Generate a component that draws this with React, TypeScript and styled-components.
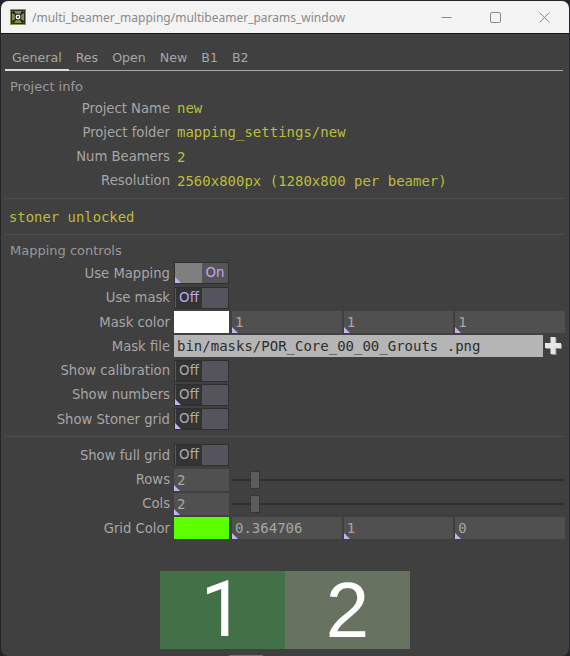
import styled, { createGlobalStyle } from "styled-components";

const GlobalStyle = createGlobalStyle`
  html, body {
    margin: 0;
    padding: 0;
    background: #23252b;
  }
`;

const Window = styled.div`
  width: 570px;
  height: 656px;
  box-sizing: border-box;
  overflow: hidden;
  background: #404040;
  border: 1px solid #26262a;
  border-bottom: none;
  border-radius: 8px;
  font-family: "DejaVu Sans", sans-serif;
`;

const TitleBar = styled.div`
  height: 32px;
  background: #f3f3f3;
  border-bottom: 1px solid #151515;
  display: flex;
  align-items: center;
  padding: 0 0 0 9px;
  font-family: "Noto Sans", sans-serif;
  font-size: 12px;
  color: #8a8a8a;
`;

const TitleText = styled.span`
  margin-left: 6px;
  flex: 1;
`;

const WinButton = styled.div`
  width: 49px;
  height: 32px;
  display: flex;
  align-items: center;
  justify-content: center;
`;

const Content = styled.div`
  padding: 0 4px;
`;

const Tabs = styled.div`
  display: flex;
  height: 21px;
  padding-top: 15px;
  margin-right: 2px;
  border-bottom: 1px solid #a8a8a8;
`;

const Tab = styled.div<{ $active?: boolean }>`
  font-size: 12.6px;
  color: #a6a6a6;
  padding: 0 7px;
  height: 22px;
  line-height: 17px;
  box-sizing: border-box;
  border-bottom: ${(p) => (p.$active ? "2px solid #dcdcdc" : "none")};
`;

const SectionTitle = styled.div`
  font-size: 13px;
  color: #999;
  padding-left: 5px;
  margin-top: 7px;
  height: 17px;
  line-height: 17px;
`;

const InfoRows = styled.div`
  display: flex;
  flex-direction: column;
  gap: 8.3px;
  margin-top: 5px;
  padding-bottom: 9px;
`;

const Row = styled.div`
  display: flex;
  align-items: center;
  height: 16px;
`;

const Label = styled.div`
  width: 165px;
  text-align: right;
  font-size: 13.2px;
  color: #a6a6a6;
  flex-shrink: 0;
  white-space: nowrap;
`;

const Value = styled.div`
  margin-left: 7px;
  font-family: "DejaVu Sans Mono", monospace;
  font-size: 14px;
  color: #bcbc3e;
  white-space: nowrap;
`;

const Divider = styled.div`
  height: 1px;
  background: #4e4e4e;
`;

const Unlocked = styled.div`
  font-family: "DejaVu Sans Mono", monospace;
  font-size: 13.9px;
  color: #bcbc3e;
  padding-left: 4px;
  height: 35px;
  line-height: 36px;
`;

const ControlRows = styled.div<{ $top: number; $bottom?: number }>`
  display: flex;
  flex-direction: column;
  gap: 2.3px;
  padding-top: ${(p) => p.$top}px;
  padding-bottom: ${(p) => p.$bottom ?? 0}px;
`;

const ControlRow = styled.div`
  display: flex;
  align-items: center;
  height: 22px;
`;

const Corner = styled.span`
  position: absolute;
  left: 0;
  bottom: 0;
  width: 0;
  height: 0;
  border-left: 6px solid #c2b2f2;
  border-top: 6px solid transparent;
`;

const ToggleBox = styled.div`
  position: relative;
  margin-left: 4px;
  width: 55px;
  height: 22px;
  box-sizing: border-box;
  display: flex;
  font-size: 13.4px;
  line-height: 20px;
  background: #2e2e2e;
  border: 1px solid #2f2f2f;
  flex-shrink: 0;
`;

const ToggleOn = styled.div`
  width: 27px;
  background: #7f7f7f;
`;

const ToggleOnLabel = styled.div`
  flex: 1;
  background: #555;
  color: #b9a8f0;
  text-align: center;
`;

const ToggleOffLabel = styled.div<{ $accent?: boolean }>`
  width: 27px;
  box-sizing: border-box;
  background: #333;
  border-left: 1px solid #5a5a5a;
  color: ${(p) => (p.$accent ? "#b9a8f0" : "#ababab")};
  text-align: center;
`;

const ToggleThumb = styled.div`
  flex: 1;
  background: #55545c;
`;

const Swatch = styled.div<{ $color: string }>`
  margin-left: 4px;
  width: 55px;
  height: 22px;
  background: ${(p) => p.$color};
  flex-shrink: 0;
`;

const NumberCells = styled.div`
  display: flex;
  gap: 2px;
  margin-left: 3px;
  flex: 1;
`;

const NumberCell = styled.div`
  position: relative;
  flex: 1;
  height: 22px;
  background: #505050;
  color: #a6a6a6;
  font-family: "DejaVu Sans Mono", monospace;
  font-size: 14px;
  line-height: 23px;
  padding-left: 3px;
`;

const FileField = styled.div`
  margin-left: 4px;
  width: 369px;
  height: 22px;
  background: #b5b5b5;
  color: #2e2e2e;
  font-family: "DejaVu Sans Mono", monospace;
  font-size: 14px;
  line-height: 22px;
  padding-left: 3px;
  box-sizing: border-box;
  white-space: nowrap;
  flex-shrink: 0;
`;

const PlusIcon = styled.svg`
  margin-left: 2px;
  flex-shrink: 0;
`;

const Num = styled.div`
  position: relative;
  margin-left: 4px;
  width: 55px;
  height: 22px;
  background: #505050;
  color: #a6a6a6;
  font-family: "DejaVu Sans Mono", monospace;
  font-size: 14px;
  line-height: 23px;
  padding-left: 3px;
  box-sizing: border-box;
  flex-shrink: 0;
`;

const Slider = styled.div`
  position: relative;
  flex: 1;
  margin-left: 3px;
  height: 22px;
  display: flex;
  align-items: center;
`;

const SliderTrack = styled.div`
  flex: 1;
  height: 2px;
  background: #2f2f2f;
`;

const SliderThumb = styled.div`
  position: absolute;
  left: 18px;
  top: 2px;
  width: 10px;
  height: 18px;
  box-sizing: border-box;
  background: #5c5c5c;
  border: 1px solid #363636;
`;

const Preview = styled.div`
  display: flex;
  margin: 32px 0 0 155px;
  width: 250px;
  height: 78px;
`;

const PreviewCell = styled.div<{ $color: string; $face: string }>`
  flex: 1;
  background: ${(p) => p.$color};
  color: #fff;
  font-family: ${(p) => p.$face}, sans-serif;
  font-size: 78px;
  line-height: 78px;
  text-align: center;
`;

/* the top edge of whatever sits below the preview, cut off by the window */
const CutOffEdge = styled.div`
  margin: 6px 0 0 224px;
  width: 34px;
  height: 1px;
  background: #74706f;
`;

const Toggle = ({ on, accent, corner = true }: { on?: boolean; accent?: boolean; corner?: boolean }) => (
  <ToggleBox>
    {on ? (
      <>
        <ToggleOn />
        <ToggleOnLabel>On</ToggleOnLabel>
      </>
    ) : (
      <>
        <ToggleOffLabel $accent={accent}>Off</ToggleOffLabel>
        <ToggleThumb />
      </>
    )}
    {corner && <Corner />}
  </ToggleBox>
);

const Cells = ({ values }: { values: string[] }) => (
  <NumberCells>
    {values.map((v, i) => (
      <NumberCell key={i}>
        {v}
        <Corner />
      </NumberCell>
    ))}
  </NumberCells>
);

const PLUS = "M5.5 0 H10.5 V6 H16 V11 H10.5 V17 H5.5 V11 H0 V6 H5.5 Z";

export default function App() {
  return (
    <Window>
      <GlobalStyle />
      <TitleBar>
        <svg width="16" height="16" viewBox="0 0 16 16">
          <rect width="16" height="16" fill="#8b9a58" />
          <rect x="1.5" y="1.5" width="13" height="13" fill="#7f8e50" stroke="#2a2f1c" />
          <path d="M3 3 L13 13 M13 3 L3 13" stroke="#222" strokeWidth="1.5" />
          <circle cx="8" cy="8" r="3" fill="#f2f2f2" stroke="#222" />
          <circle cx="8" cy="8" r="1" fill="#222" />
          <circle cx="3.5" cy="3.5" r="1.3" fill="#1d1d1d" />
          <circle cx="12.5" cy="3.5" r="1.3" fill="#1d1d1d" />
          <circle cx="3.5" cy="12.5" r="1.3" fill="#1d1d1d" />
          <circle cx="12.5" cy="12.5" r="1.3" fill="#1d1d1d" />
        </svg>
        <TitleText>/multi_beamer_mapping/multibeamer_params_window</TitleText>
        <WinButton>
          <svg width="11" height="11" viewBox="0 0 11 11">
            <path d="M0.5 5.5 H10.5" stroke="#8a8a8a" />
          </svg>
        </WinButton>
        <WinButton>
          <svg width="11" height="11" viewBox="0 0 11 11">
            <rect x="0.5" y="0.5" width="10" height="10" rx="1.5" fill="none" stroke="#8a8a8a" />
          </svg>
        </WinButton>
        <WinButton>
          <svg width="11" height="11" viewBox="0 0 11 11">
            <path d="M0.5 0.5 L10.5 10.5 M10.5 0.5 L0.5 10.5" stroke="#8a8a8a" />
          </svg>
        </WinButton>
      </TitleBar>
      <Content>
        <Tabs>
          <Tab $active>General</Tab>
          <Tab>Res</Tab>
          <Tab>Open</Tab>
          <Tab>New</Tab>
          <Tab>B1</Tab>
          <Tab>B2</Tab>
        </Tabs>
        <SectionTitle>Project info</SectionTitle>
        <InfoRows>
          <Row>
            <Label>Project Name</Label>
            <Value>new</Value>
          </Row>
          <Row>
            <Label>Project folder</Label>
            <Value>mapping_settings/new</Value>
          </Row>
          <Row>
            <Label>Num Beamers</Label>
            <Value>2</Value>
          </Row>
          <Row>
            <Label>Resolution</Label>
            <Value>2560x800px (1280x800 per beamer)</Value>
          </Row>
        </InfoRows>
        <Divider />
        <Unlocked>stoner unlocked</Unlocked>
        <Divider />
        <SectionTitle>Mapping controls</SectionTitle>
        <ControlRows $top={3.6} $bottom={6}>
          <ControlRow>
            <Label>Use Mapping</Label>
            <Toggle on />
          </ControlRow>
          <ControlRow>
            <Label>Use mask</Label>
            <Toggle accent corner={false} />
          </ControlRow>
          <ControlRow>
            <Label>Mask color</Label>
            <Swatch $color="#ffffff" />
            <Cells values={["1", "1", "1"]} />
          </ControlRow>
          <ControlRow>
            <Label>Mask file</Label>
            <FileField>bin/masks/POR_Core_00_00_Grouts .png</FileField>
            <PlusIcon width="17" height="18" viewBox="0 0 17 18">
              <path d={PLUS} fill="#8c8c8c" transform="translate(1 1)" />
              <path d={PLUS} fill="#e6e6e6" />
            </PlusIcon>
          </ControlRow>
          <ControlRow>
            <Label>Show calibration</Label>
            <Toggle corner={false} />
          </ControlRow>
          <ControlRow>
            <Label>Show numbers</Label>
            <Toggle />
          </ControlRow>
          <ControlRow>
            <Label>Show Stoner grid</Label>
            <Toggle />
          </ControlRow>
        </ControlRows>
        <Divider />
        <ControlRows $top={7}>
          <ControlRow>
            <Label>Show full grid</Label>
            <Toggle corner={false} />
          </ControlRow>
          <ControlRow>
            <Label>Rows</Label>
            <Num>
              2
              <Corner />
            </Num>
            <Slider>
              <SliderTrack />
              <SliderThumb />
            </Slider>
          </ControlRow>
          <ControlRow>
            <Label>Cols</Label>
            <Num>
              2
              <Corner />
            </Num>
            <Slider>
              <SliderTrack />
              <SliderThumb />
            </Slider>
          </ControlRow>
          <ControlRow>
            <Label>Grid Color</Label>
            <Swatch $color="#5cff00" />
            <Cells values={["0.364706", "1", "0"]} />
          </ControlRow>
        </ControlRows>
        <Preview>
          <PreviewCell $color="#437147" $face="Roboto">1</PreviewCell>
          <PreviewCell $color="#687261" $face='"Liberation Sans"'>2</PreviewCell>
        </Preview>
        <CutOffEdge />
      </Content>
    </Window>
  );
}
